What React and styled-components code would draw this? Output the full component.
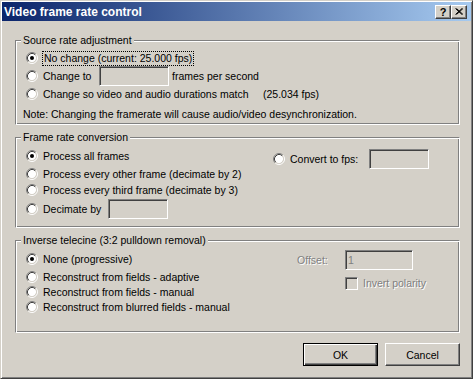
import React from "react";
import styled, { createGlobalStyle } from "styled-components";

const Global = createGlobalStyle`
  html, body { margin: 0; padding: 0; background: #d4d0c8; }
  body { font-family: "Liberation Sans", Arial, sans-serif; font-size: 10.5px; }
`;

const FACE = "#d4d0c8";

const Window = styled.div`
  box-sizing: border-box;
  width: 473px;
  height: 379px;
  background: ${FACE};
  border: 1px solid;
  border-color: ${FACE} #404040 #404040 ${FACE};
  box-shadow: inset 1px 1px 0 #fff, inset -1px -1px 0 #808080;
  padding: 1px;
  display: flex;
  flex-direction: column;
  font-family: "Liberation Sans", Arial, sans-serif;
  font-size: 10.5px;
  color: #000;
`;

const TitleBar = styled.div`
  flex: none;
  height: 19px;
  background: linear-gradient(to right, #0a246a, #a6caf0);
  display: flex;
  align-items: center;
  padding: 0 4px 0 2px;
`;

const TitleText = styled.div`
  flex: 1;
  color: #fff;
  font-weight: bold;
  font-size: 12px;
  line-height: 14px;
  white-space: nowrap;
`;

const CapButton = styled.div`
  box-sizing: border-box;
  width: 16px;
  height: 14px;
  background: ${FACE};
  border: 1px solid;
  border-color: #fff #404040 #404040 #fff;
  box-shadow: inset -1px -1px 0 #808080;
  display: flex;
  align-items: center;
  justify-content: center;
  font-weight: bold;
  font-size: 11px;
  line-height: 10px;
  color: #000;
  margin-left: ${(p) => p.$ml || 0}px;
`;

const Client = styled.div`
  flex: 1;
  display: flex;
  flex-direction: column;
  padding: 19px 11px 0 13px;
`;

const Group = styled.div`
  position: relative;
  box-sizing: border-box;
  height: ${(p) => p.$h}px;
  border: 1px solid;
  border-color: #808080 #fff #fff #808080;
  box-shadow: inset 1px 1px 0 #fff, inset -1px -1px 0 #808080;
  padding-top: ${(p) => p.$pt}px;
  margin-bottom: 12px;
  display: flex;
  flex-direction: ${(p) => (p.$cols ? "row" : "column")};
`;

const Legend = styled.div`
  position: absolute;
  top: -7px;
  left: 5px;
  padding: 0 2px;
  background: ${FACE};
  line-height: 13px;
  white-space: nowrap;
`;

const Col = styled.div`
  display: flex;
  flex-direction: column;
  width: ${(p) => (p.$w ? `${p.$w}px` : "auto")};
  padding-top: ${(p) => p.$pt || 0}px;
  flex: none;
`;

const Row = styled.div`
  display: flex;
  align-items: center;
  height: ${(p) => p.$h || 18}px;
  padding-left: ${(p) => (p.$pl === undefined ? 10 : p.$pl)}px;
  margin-top: ${(p) => p.$mt || 0}px;
  flex: none;
`;

const Label = styled.span`
  display: inline-block;
  margin-left: ${(p) => (p.$ml === undefined ? 5 : p.$ml)}px;
  width: ${(p) => (p.$w ? `${p.$w}px` : "auto")};
  white-space: nowrap;
  line-height: 13px;
  flex: none;
  color: ${(p) => (p.$disabled ? "#808080" : "#000")};
  text-shadow: ${(p) => (p.$disabled ? "1px 1px 0 #fff" : "none")};
  ${(p) =>
    p.$focus &&
    `outline: 1px dotted #000; outline-offset: 0; padding: 0 1px; margin-left: 5px;`}
`;

const Note = styled.div`
  height: 18px;
  display: flex;
  align-items: center;
  padding-left: 7px;
  margin-top: 2px;
  white-space: nowrap;
`;

const Edit = styled.input`
  box-sizing: border-box;
  appearance: none;
  width: ${(p) => p.$w}px;
  height: 20px;
  margin: 0 0 0 ${(p) => p.$ml || 0}px;
  padding: 0 2px;
  background: ${FACE};
  border: 1px solid;
  border-color: #808080 #fff #fff #808080;
  box-shadow: inset 1px 1px 0 #404040, inset -1px -1px 0 ${FACE};
  font-family: inherit;
  font-size: 10.5px;
  color: #808080;
  outline: none;
  flex: none;
`;

const CheckBox = styled.div`
  box-sizing: border-box;
  width: 13px;
  height: 13px;
  margin-left: ${(p) => p.$ml || 0}px;
  background: ${FACE};
  border: 1px solid;
  border-color: #808080 #fff #fff #808080;
  box-shadow: inset 1px 1px 0 #404040, inset -1px -1px 0 ${FACE};
  flex: none;
`;

const ButtonRow = styled.div`
  display: flex;
  justify-content: flex-end;
  gap: 7px;
  margin-top: -2px;
`;

const Button = styled.button`
  box-sizing: border-box;
  width: 75px;
  height: 23px;
  padding: 0;
  background: ${FACE};
  font-family: inherit;
  font-size: 10.5px;
  color: #000;
  border: 1px solid;
  border-color: ${(p) => (p.$default ? "#000" : "#fff #404040 #404040 #fff")};
  box-shadow: ${(p) =>
    p.$default
      ? "inset 1px 1px 0 #fff, inset -1px -1px 0 #404040, inset -2px -2px 0 #808080"
      : "inset -1px -1px 0 #808080"};
`;

const Radio = ({ checked }) => (
  <svg width="12" height="12" viewBox="0 0 12 12" style={{ flex: "none" }}>
    <circle cx="6" cy="6" r="4.2" fill="#fff" />
    <path d="M2.11 9.89 A5.5 5.5 0 0 1 9.89 2.11" stroke="#808080" fill="none" />
    <path d="M9.89 2.11 A5.5 5.5 0 0 1 2.11 9.89" stroke="#fff" fill="none" />
    <path d="M2.82 9.18 A4.5 4.5 0 0 1 9.18 2.82" stroke="#404040" fill="none" />
    <path d="M9.18 2.82 A4.5 4.5 0 0 1 2.82 9.18" stroke={FACE} fill="none" />
    {checked && <circle cx="6" cy="6" r="2" fill="#000" />}
  </svg>
);

const CloseGlyph = () => (
  <svg width="8" height="7" viewBox="0 0 8 7">
    <path d="M0.5 0.5 L7 6.5 M1.5 0.5 L8 6.5 M7 0.5 L0.5 6.5 M8 0.5 L1.5 6.5" stroke="#000" strokeWidth="1" />
  </svg>
);

export default function App() {
  return (
    <>
      <Global />
      <Window>
        <TitleBar>
          <TitleText>Video frame rate control</TitleText>
          <CapButton>?</CapButton>
          <CapButton $ml={0}>
            <CloseGlyph />
          </CapButton>
        </TitleBar>
        <Client>
          <Group $h={85} $pt={8}>
            <Legend>Source rate adjustment</Legend>
            <Row>
              <Radio checked />
              <Label $focus>No change (current: 25.000 fps)</Label>
            </Row>
            <Row>
              <Radio />
              <Label $w={56}>Change to</Label>
              <Edit $w={70} readOnly tabIndex={-1} />
              <Label $ml={3}>frames per second</Label>
            </Row>
            <Row>
              <Radio />
              <Label $w={220}>Change so video and audio durations match</Label>
              <Label $ml={0}>(25.034 fps)</Label>
            </Row>
            <Note>Note: Changing the framerate will cause audio/video desynchronization.</Note>
          </Group>

          <Group $h={91} $pt={9} $cols>
            <Legend>Frame rate conversion</Legend>
            <Col $w={257}>
              <Row>
                <Radio checked />
                <Label>Process all frames</Label>
              </Row>
              <Row>
                <Radio />
                <Label>Process every other frame (decimate by 2)</Label>
              </Row>
              <Row $mt={-2}>
                <Radio />
                <Label>Process every third frame (decimate by 3)</Label>
              </Row>
              <Row $mt={1}>
                <Radio />
                <Label $w={65}>Decimate by</Label>
                <Edit $w={60} readOnly tabIndex={-1} />
              </Row>
            </Col>
            <Col $pt={2}>
              <Row $h={20} $pl={0}>
                <Radio />
                <Label $w={79}>Convert to fps:</Label>
                <Edit $w={60} readOnly tabIndex={-1} />
              </Row>
            </Col>
          </Group>

          <Group $h={93} $pt={9} $cols>
            <Legend>Inverse telecine (3:2 pulldown removal)</Legend>
            <Col $w={281}>
              <Row>
                <Radio checked />
                <Label>None (progressive)</Label>
              </Row>
              <Row>
                <Radio />
                <Label>Reconstruct from fields - adaptive</Label>
              </Row>
              <Row $mt={-3}>
                <Radio />
                <Label>Reconstruct from fields - manual</Label>
              </Row>
              <Row $mt={-3}>
                <Radio />
                <Label>Reconstruct from blurred fields - manual</Label>
              </Row>
            </Col>
            <Col>
              <Row $h={20} $pl={0}>
                <Label $ml={0} $w={48} $disabled>Offset:</Label>
                <Edit $w={68} readOnly tabIndex={-1} value="1" />
              </Row>
              <Row $h={13} $pl={0} $mt={7}>
                <CheckBox $ml={48} />
                <Label $disabled>Invert polarity</Label>
              </Row>
            </Col>
          </Group>

          <ButtonRow>
            <Button $default>OK</Button>
            <Button>Cancel</Button>
          </ButtonRow>
        </Client>
      </Window>
    </>
  );
}
